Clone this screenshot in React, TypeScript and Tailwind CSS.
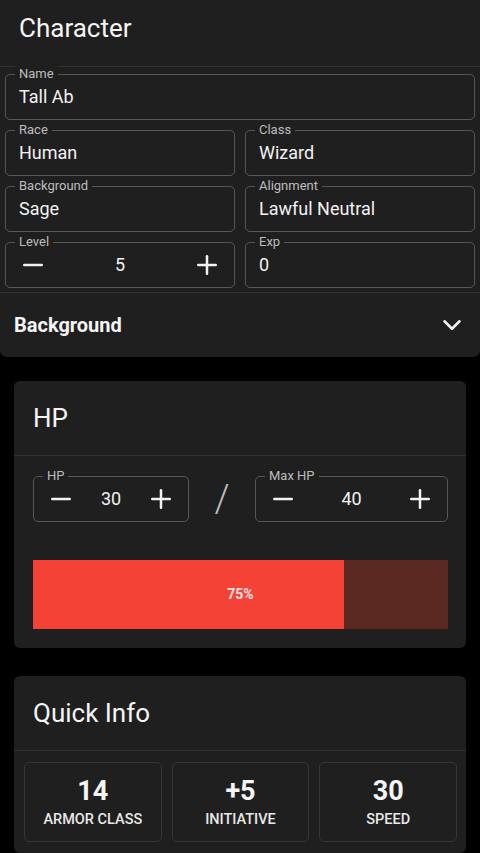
import { ChevronDown, Minus, Plus } from 'lucide-react';
import type { ReactNode } from 'react';

function Field({ label, children, className = '' }: { label: string; children: ReactNode; className?: string }) {
    return (
        <div className={`relative h-[46px] rounded-[5px] border border-[#575757] ${className}`}>
            <span className="absolute left-[9px] top-[-9px] bg-[#1f1f1f] px-[4px] text-[13px] leading-[16px] text-[#bdbdbd]">
                {label}
            </span>
            {children}
        </div>
    );
}

function TextField({ label, value }: { label: string; value: string }) {
    return (
        <Field label={label}>
            <div className="flex h-full items-center pb-[2px] pl-[13px] text-[18px] text-[#f2f2f2]">{value}</div>
        </Field>
    );
}

function Stepper({ label, value, className = '' }: { label: string; value: number; className?: string }) {
    return (
        <Field label={label} className={className}>
            <div className="flex h-full items-center justify-between px-[12px] pb-[1px] text-[#f2f2f2]">
                <Minus size={30} strokeWidth={2} />
                <span className="text-[18px]">{value}</span>
                <Plus size={30} strokeWidth={2} />
            </div>
        </Field>
    );
}

function Card({ title, children }: { title: string; children: ReactNode }) {
    return (
        <section className="mx-[14px] rounded-[6px] bg-[#1f1f1f]">
            <div className="flex h-[75px] items-center border-b border-[#333333] px-[19px] pt-[1px] text-[26px] text-[#f5f5f5]">
                {title}
            </div>
            {children}
        </section>
    );
}

function Stat({ value, label }: { value: string; label: string }) {
    return (
        <div className="flex h-[80px] flex-col items-center justify-center rounded-[5px] border border-[#363636] pb-[1px]">
            <div className="text-[27px] font-bold leading-[32px] text-[#f5f5f5]">{value}</div>
            <div className="mt-[4px] text-[14.5px] font-medium leading-[17px] text-[#e8e8e8]">{label}</div>
        </div>
    );
}

export default function App() {
    const hp = 30;
    const maxHp = 40;
    const pct = Math.round((hp / maxHp) * 100);

    return (
        <div className="h-[853px] overflow-hidden bg-black pb-10 font-['Roboto',sans-serif] text-white">
            <section className="rounded-b-[7px] bg-[#1f1f1f]">
                <div className="flex h-[67px] items-center border-b border-[#333333] px-[19px] pb-[10px] text-[26px] text-[#f5f5f5]">
                    Character
                </div>
                <div className="flex flex-col gap-[10px] px-[5px] pt-[7px] pb-[4px]">
                    <TextField label="Name" value="Tall Ab" />
                    <div className="grid grid-cols-2 gap-[10px]">
                        <TextField label="Race" value="Human" />
                        <TextField label="Class" value="Wizard" />
                    </div>
                    <div className="grid grid-cols-2 gap-[10px]">
                        <TextField label="Background" value="Sage" />
                        <TextField label="Alignment" value="Lawful Neutral" />
                    </div>
                    <div className="grid grid-cols-2 gap-[10px]">
                        <Stepper label="Level" value={5} />
                        <TextField label="Exp" value="0" />
                    </div>
                </div>
                <div className="flex h-[65px] items-center justify-between border-t border-[#333333] pl-[14px] pr-[13px]">
                    <span className="text-[20px] font-bold text-[#f5f5f5]">Background</span>
                    <ChevronDown size={30} strokeWidth={2} className="text-[#f0f0f0]" />
                </div>
            </section>

            <div className="mt-[24px]">
                <Card title="HP">
                    <div className="px-[19px] pb-[19px] pt-[20px] pr-[18px]">
                        <div className="flex items-center">
                            <Stepper label="HP" value={hp} className="w-[156px]" />
                            <div className="flex w-[66px] justify-center text-[38px] font-light leading-none text-[#bdbdbd]">/</div>
                            <Stepper label="Max HP" value={maxHp} className="flex-1" />
                        </div>
                        <div className="relative mt-[38px] flex h-[69px] bg-[#5c2822]">
                            <div className="h-full bg-[#f44336]" style={{ width: `${pct}%` }} />
                            <div className="absolute inset-0 flex items-center justify-center text-[14px] font-bold text-[#f3e4e2]">
                                {pct}%
                            </div>
                        </div>
                    </div>
                </Card>
            </div>

            <div className="mt-[28px]">
                <Card title="Quick Info">
                    <div className="grid grid-cols-3 gap-[10px] pl-[10px] pr-[9px] pt-[11px] pb-[11px]">
                        <Stat value="14" label="ARMOR CLASS" />
                        <Stat value="+5" label="INITIATIVE" />
                        <Stat value="30" label="SPEED" />
                    </div>
                </Card>
            </div>
        </div>
    );
}
